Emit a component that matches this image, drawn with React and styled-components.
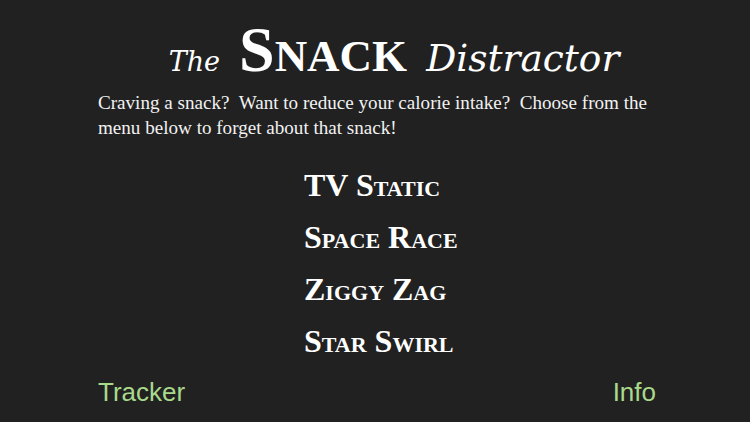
import styled, { createGlobalStyle } from "styled-components";

const GlobalStyle = createGlobalStyle`
  html, body {
    margin: 0;
    padding: 0;
    background: #212121;
  }
  #root {
    width: 750px;
    height: 422px;
  }
`;

const menuItems = ["TV Static", "Space Race", "Ziggy Zag", "Star Swirl"];

function App() {
    return (
        <Styled.Root>
            <GlobalStyle />
            <Styled.Title>
                <Styled.TitleScript size={27}>The</Styled.TitleScript>
                <Styled.TitleBig>Snack</Styled.TitleBig>
                <Styled.TitleScript size={37.5}>Distractor</Styled.TitleScript>
            </Styled.Title>
            <Styled.Intro>
                Craving a snack?&nbsp; Want to reduce your calorie intake?&nbsp; Choose from the menu below to forget about that snack!
            </Styled.Intro>
            <Styled.Menu>
                {menuItems.map((item) => (
                    <Styled.MenuItem key={item}>{item}</Styled.MenuItem>
                ))}
            </Styled.Menu>
            <Styled.Footer>
                <Styled.FooterLink>Tracker</Styled.FooterLink>
                <Styled.FooterLink>Info</Styled.FooterLink>
            </Styled.Footer>
        </Styled.Root>
    );
}

export default App;

const Styled = {
    Root: styled.div`
    width: 750px;
    height: 422px;
    box-sizing: border-box;
    padding: 0 94px 0 98px;
    display: flex;
    flex-direction: column;
    background: #212121;
    color: #ffffff;
    overflow: hidden;
    `,
    Title: styled.h1`
    margin: 18px 0 0 34px;
    display: flex;
    justify-content: center;
    align-items: baseline;
    gap: 19px;
    font-weight: normal;
    line-height: 64px;
    `,
    TitleScript: styled.span`
    font-family: "DejaVu Serif", serif;
    font-size: ${(p) => p.size}px;
    font-style: italic;
    `,
    TitleBig: styled.span`
    font-family: "Liberation Serif", serif;
    font-size: 64px;
    font-weight: bold;
    font-variant: small-caps;
    `,
    Intro: styled.p`
    margin: -4px 0 0;
    font-family: "Liberation Serif", serif;
    font-size: 19.1px;
    line-height: 25px;
    color: #f2f2f2;
    `,
    Menu: styled.div`
    margin-top: 25px;
    padding-left: 206px;
    display: flex;
    flex-direction: column;
    gap: 12px;
    `,
    MenuItem: styled.div`
    font-family: "Liberation Serif", serif;
    font-size: 32px;
    font-weight: bold;
    font-variant: small-caps;
    line-height: 40px;
    cursor: pointer;
    `,
    Footer: styled.div`
    margin-top: auto;
    margin-bottom: 14px;
    display: flex;
    justify-content: space-between;
    `,
    FooterLink: styled.div`
    font-family: "Liberation Sans", sans-serif;
    font-size: 26px;
    color: #a9d98b;
    cursor: pointer;
    `,
};
